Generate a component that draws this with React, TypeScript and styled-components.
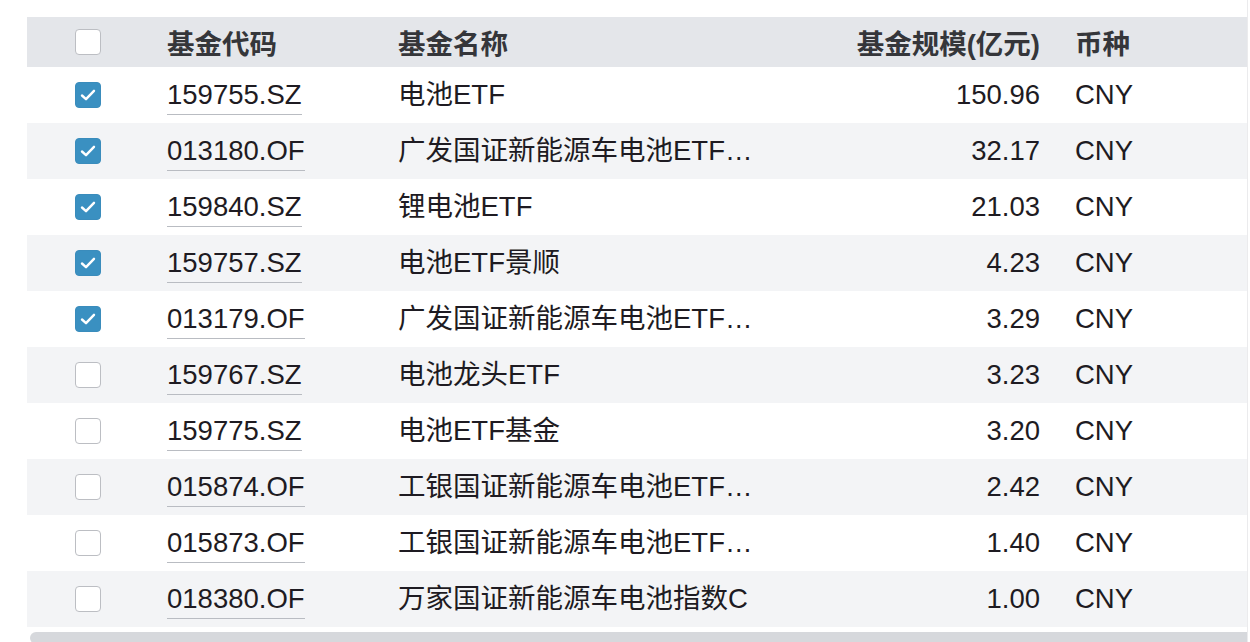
import React from "react";
import styled, { createGlobalStyle } from "styled-components";

const funds = [
  { code: "159755.SZ", name: "电池ETF", scale: "150.96", checked: true },
  { code: "013180.OF", name: "广发国证新能源车电池ETF联接A", scale: "32.17", checked: true },
  { code: "159840.SZ", name: "锂电池ETF", scale: "21.03", checked: true },
  { code: "159757.SZ", name: "电池ETF景顺", scale: "4.23", checked: true },
  { code: "013179.OF", name: "广发国证新能源车电池ETF联接C", scale: "3.29", checked: true },
  { code: "159767.SZ", name: "电池龙头ETF", scale: "3.23", checked: false },
  { code: "159775.SZ", name: "电池ETF基金", scale: "3.20", checked: false },
  { code: "015874.OF", name: "工银国证新能源车电池ETF联接C", scale: "2.42", checked: false },
  { code: "015873.OF", name: "工银国证新能源车电池ETF联接A", scale: "1.40", checked: false },
  { code: "018380.OF", name: "万家国证新能源车电池指数C", scale: "1.00", checked: false },
];

function App() {
  return (
    <>
      <GlobalStyle />
      <Page>
        <Table>
          <HeaderRow>
            <CheckCell>
              <Checkbox />
            </CheckCell>
            <HeadCell>基金代码</HeadCell>
            <HeadCell>基金名称</HeadCell>
            <HeadCell $align="right">基金规模(亿元)</HeadCell>
            <HeadCell $pad>币种</HeadCell>
          </HeaderRow>
          {funds.map((f, i) => (
            <Row key={f.code} $alt={i % 2 === 1}>
              <CheckCell>
                <Checkbox checked={f.checked} />
              </CheckCell>
              <Cell>
                <Code>{f.code}</Code>
              </Cell>
              <Cell>
                <Name>{f.name}</Name>
              </Cell>
              <Cell $align="right">{f.scale}</Cell>
              <Cell $pad>CNY</Cell>
            </Row>
          ))}
        </Table>
        <Scrollbar />
      </Page>
    </>
  );
}

function Checkbox({ checked = false }: { checked?: boolean }) {
  return (
    <Box $checked={checked}>
      {checked && (
        <svg width="20" height="20" viewBox="0 0 20 20">
          <path d="M4 10.5 L8 14.2 L16 5.8" fill="none" stroke="#fff" strokeWidth="2.4" strokeLinecap="round" strokeLinejoin="round" />
        </svg>
      )}
    </Box>
  );
}

const GlobalStyle = createGlobalStyle`
  html, body {
    margin: 0;
    padding: 0;
    background: #fff;
  }
  body {
    font-family: "Liberation Sans", "Noto Sans CJK SC", sans-serif;
  }
`;

const Page = styled.div`
  width: 1248px;
  height: 642px;
  padding: 17px 0 0 27px;
  box-sizing: border-box;
  border-right: 1px solid #ebebed;
  overflow: hidden;
`;

const Table = styled.div`
  width: 1220px;
  display: flex;
  flex-direction: column;
`;

const columns = "140px 231px 442px 200px 1fr";

const HeaderRow = styled.div`
  display: grid;
  grid-template-columns: ${columns};
  height: 50px;
  align-items: center;
  background: #e4e6ea;
`;

const Row = styled.div<{ $alt?: boolean }>`
  display: grid;
  grid-template-columns: ${columns};
  height: 56px;
  align-items: center;
  background: ${(p) => (p.$alt ? "#f3f4f6" : "#fff")};
`;

const CheckCell = styled.div`
  padding-left: 48px;
  display: flex;
  align-items: center;
`;

const HeadCell = styled.div<{ $align?: string; $pad?: boolean }>`
  font-size: 27.5px;
  font-weight: 700;
  color: #35363a;
  text-align: ${(p) => p.$align || "left"};
  padding-left: ${(p) => (p.$pad ? "35px" : "0")};
  white-space: nowrap;
`;

const Cell = styled.div<{ $align?: string; $pad?: boolean }>`
  font-size: 27.5px;
  line-height: 32px;
  color: #1e1b22;
  text-align: ${(p) => p.$align || "left"};
  padding-left: ${(p) => (p.$pad ? "35px" : "0")};
  white-space: nowrap;
`;

const Code = styled.span`
  display: inline-block;
  line-height: 32px;
  padding-bottom: 3px;
  margin-bottom: -4px;
  border-bottom: 1px solid #b9bcc2;
`;

const Name = styled.div`
  max-width: 362px;
  overflow: hidden;
  text-overflow: ellipsis;
  white-space: nowrap;
`;

const Box = styled.span<{ $checked: boolean }>`
  width: 26px;
  height: 26px;
  box-sizing: border-box;
  border-radius: 4px;
  display: flex;
  align-items: center;
  justify-content: center;
  background: ${(p) => (p.$checked ? "#3a90c1" : "#fff")};
  border: ${(p) => (p.$checked ? "1px solid #3a8cbc" : "1.5px solid #bcbec3")};
`;

const Scrollbar = styled.div`
  margin: 5px 0 0 3px;
  width: 1217px;
  height: 12px;
  background: #d6d8dc;
  border-radius: 6px 0 0 6px;
`;

export default App;
